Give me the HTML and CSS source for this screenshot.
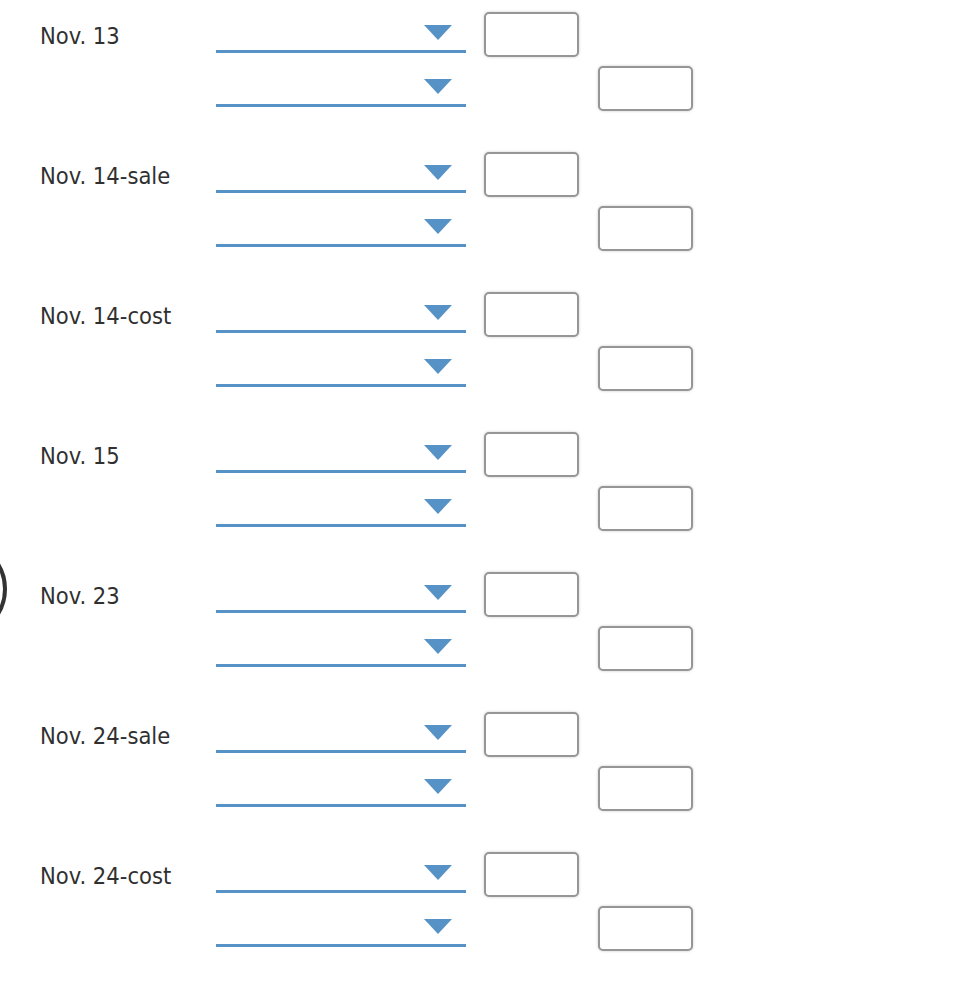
FILE: index.html
```html
<!DOCTYPE html>
<html lang="en">
<head>
<meta charset="utf-8">
<title>Journal entries</title>
<link rel="stylesheet" href="styles.css">
</head>
<body>
<div class="ring" aria-hidden="true"></div>
<div class="entries">
  <div class="entry">
    <div class="row">
      <div class="label">Nov. 13</div>
      <div class="select"><span class="arrow"></span></div>
      <input class="amount debit" type="text">
    </div>
    <div class="row">
      <div class="label"></div>
      <div class="select"><span class="arrow"></span></div>
      <input class="amount credit" type="text">
    </div>
  </div>
  <div class="entry">
    <div class="row">
      <div class="label">Nov. 14-sale</div>
      <div class="select"><span class="arrow"></span></div>
      <input class="amount debit" type="text">
    </div>
    <div class="row">
      <div class="label"></div>
      <div class="select"><span class="arrow"></span></div>
      <input class="amount credit" type="text">
    </div>
  </div>
  <div class="entry">
    <div class="row">
      <div class="label">Nov. 14-cost</div>
      <div class="select"><span class="arrow"></span></div>
      <input class="amount debit" type="text">
    </div>
    <div class="row">
      <div class="label"></div>
      <div class="select"><span class="arrow"></span></div>
      <input class="amount credit" type="text">
    </div>
  </div>
  <div class="entry">
    <div class="row">
      <div class="label">Nov. 15</div>
      <div class="select"><span class="arrow"></span></div>
      <input class="amount debit" type="text">
    </div>
    <div class="row">
      <div class="label"></div>
      <div class="select"><span class="arrow"></span></div>
      <input class="amount credit" type="text">
    </div>
  </div>
  <div class="entry">
    <div class="row">
      <div class="label">Nov. 23</div>
      <div class="select"><span class="arrow"></span></div>
      <input class="amount debit" type="text">
    </div>
    <div class="row">
      <div class="label"></div>
      <div class="select"><span class="arrow"></span></div>
      <input class="amount credit" type="text">
    </div>
  </div>
  <div class="entry">
    <div class="row">
      <div class="label">Nov. 24-sale</div>
      <div class="select"><span class="arrow"></span></div>
      <input class="amount debit" type="text">
    </div>
    <div class="row">
      <div class="label"></div>
      <div class="select"><span class="arrow"></span></div>
      <input class="amount credit" type="text">
    </div>
  </div>
  <div class="entry">
    <div class="row">
      <div class="label">Nov. 24-cost</div>
      <div class="select"><span class="arrow"></span></div>
      <input class="amount debit" type="text">
    </div>
    <div class="row">
      <div class="label"></div>
      <div class="select"><span class="arrow"></span></div>
      <input class="amount credit" type="text">
    </div>
  </div>
</div>
</body>
</html>
```

FILE: styles.css
```css
html, body {
  margin: 0;
  padding: 0;
  background: #ffffff;
}

body {
  position: relative;
  width: 964px;
  height: 982px;
  overflow: hidden;
  font-family: "DejaVu Sans Condensed", "DejaVu Sans", sans-serif;
  font-stretch: condensed;
  color: #303030;
}

.ring {
  position: absolute;
  left: -91px;
  top: 540px;
  width: 98px;
  height: 98px;
  box-sizing: border-box;
  border: 4px solid #333333;
  border-radius: 50%;
}

.entries {
  padding: 12px 0 0 40px;
  display: flex;
  flex-direction: column;
  gap: 32px;
}

.row {
  display: grid;
  grid-template-columns: 176px 268px 114px 95px;
  height: 54px;
  align-items: start;
}

.label {
  font-size: 23.5px;
  line-height: 27px;
  padding-top: 11px;
  white-space: nowrap;
}

.select {
  width: 250px;
  height: 41px;
  box-sizing: border-box;
  border-bottom: 3px solid #5692c6;
  display: flex;
  justify-content: flex-end;
  align-items: flex-start;
  padding: 13px 14px 0 0;
}

.arrow {
  width: 0;
  height: 0;
  border-left: 14px solid transparent;
  border-right: 14px solid transparent;
  border-top: 15px solid #5692c6;
}

.amount {
  width: 95px;
  height: 45px;
  box-sizing: border-box;
  margin: 0;
  border: 2px solid #969696;
  border-radius: 5px;
  background: #ffffff;
  box-shadow: 0 0 3px rgba(0, 0, 0, 0.2);
  padding: 0 6px;
  font: inherit;
  font-size: 16px;
}

.debit {
  grid-column: 3;
}

.credit {
  grid-column: 4;
}
```
